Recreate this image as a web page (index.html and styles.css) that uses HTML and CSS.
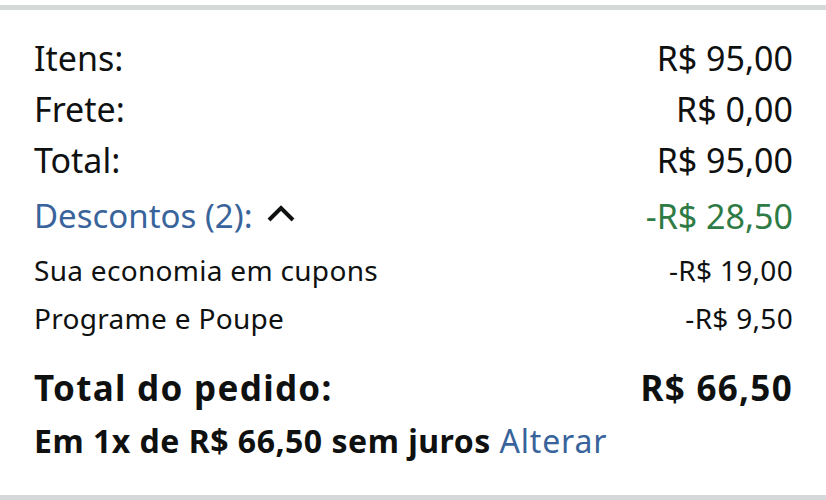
FILE: index.html
```html
<!DOCTYPE html>
<html>
	<head>
		<meta charset="UTF-8">
		<title>Resumo do pedido</title>
		<link rel="stylesheet" href="styles.css">
	</head>
	<body>
		<div class="summary">
			<div class="row big">
				<span>Itens:</span>
				<span>R$ 95,00</span>
			</div>
			<div class="row big">
				<span>Frete:</span>
				<span>R$ 0,00</span>
			</div>
			<div class="row big">
				<span>Total:</span>
				<span>R$ 95,00</span>
			</div>
			<div class="row big discounts">
				<span class="link">Descontos (2):<svg class="caret" width="28" height="18" viewBox="0 0 28 18"><path d="M2 16 L14 4 L26 16" fill="none" stroke="#0f1111" stroke-width="4"/></svg></span>
				<span class="green">-R$ 28,50</span>
			</div>
			<div class="row small">
				<span>Sua economia em cupons</span>
				<span>-R$ 19,00</span>
			</div>
			<div class="row small">
				<span>Programe e Poupe</span>
				<span>-R$ 9,50</span>
			</div>
			<div class="row grand">
				<span>Total do pedido:</span>
				<span>R$ 66,50</span>
			</div>
			<div class="installments">Em 1x de R$ 66,50 sem juros <span class="link">Alterar</span></div>
		</div>
	</body>
</html>
```

FILE: styles.css
```css
body{
	margin: 0;
	padding: 0;
	background: #fff;
	font-family: "Noto Sans", "Open Sans", sans-serif;
	color: #0f1111;
}
.summary{
	margin-top: 5px;
	height: 495px;
	box-sizing: border-box;
	border-top: 5px solid #d5d9d9;
	border-bottom: 5px solid #d5d9d9;
	padding: 22px 33px 0 34px;
}
.row{
	display: flex;
	justify-content: space-between;
	align-items: center;
}
.big{
	font-size: 34px;
	height: 51px;
}
.discounts{
	height: 61px;
}
.discounts .link{
	font-size: 33px;
}
.small{
	font-size: 28px;
	letter-spacing: 0.3px;
	height: 48px;
}
.grand{
	font-size: 35px;
	font-weight: bold;
	letter-spacing: 1.3px;
	height: 66px;
	padding-top: 12px;
}
.installments{
	font-size: 32px;
	font-weight: bold;
	letter-spacing: 0.5px;
	line-height: 42px;
}
.installments .link{
	font-weight: normal;
	letter-spacing: 0.8px;
}
.link{
	color: #39649b;
}
.green{
	color: #2f7b45;
}
.caret{
	margin-left: 14px;
	vertical-align: 6px;
}
```
